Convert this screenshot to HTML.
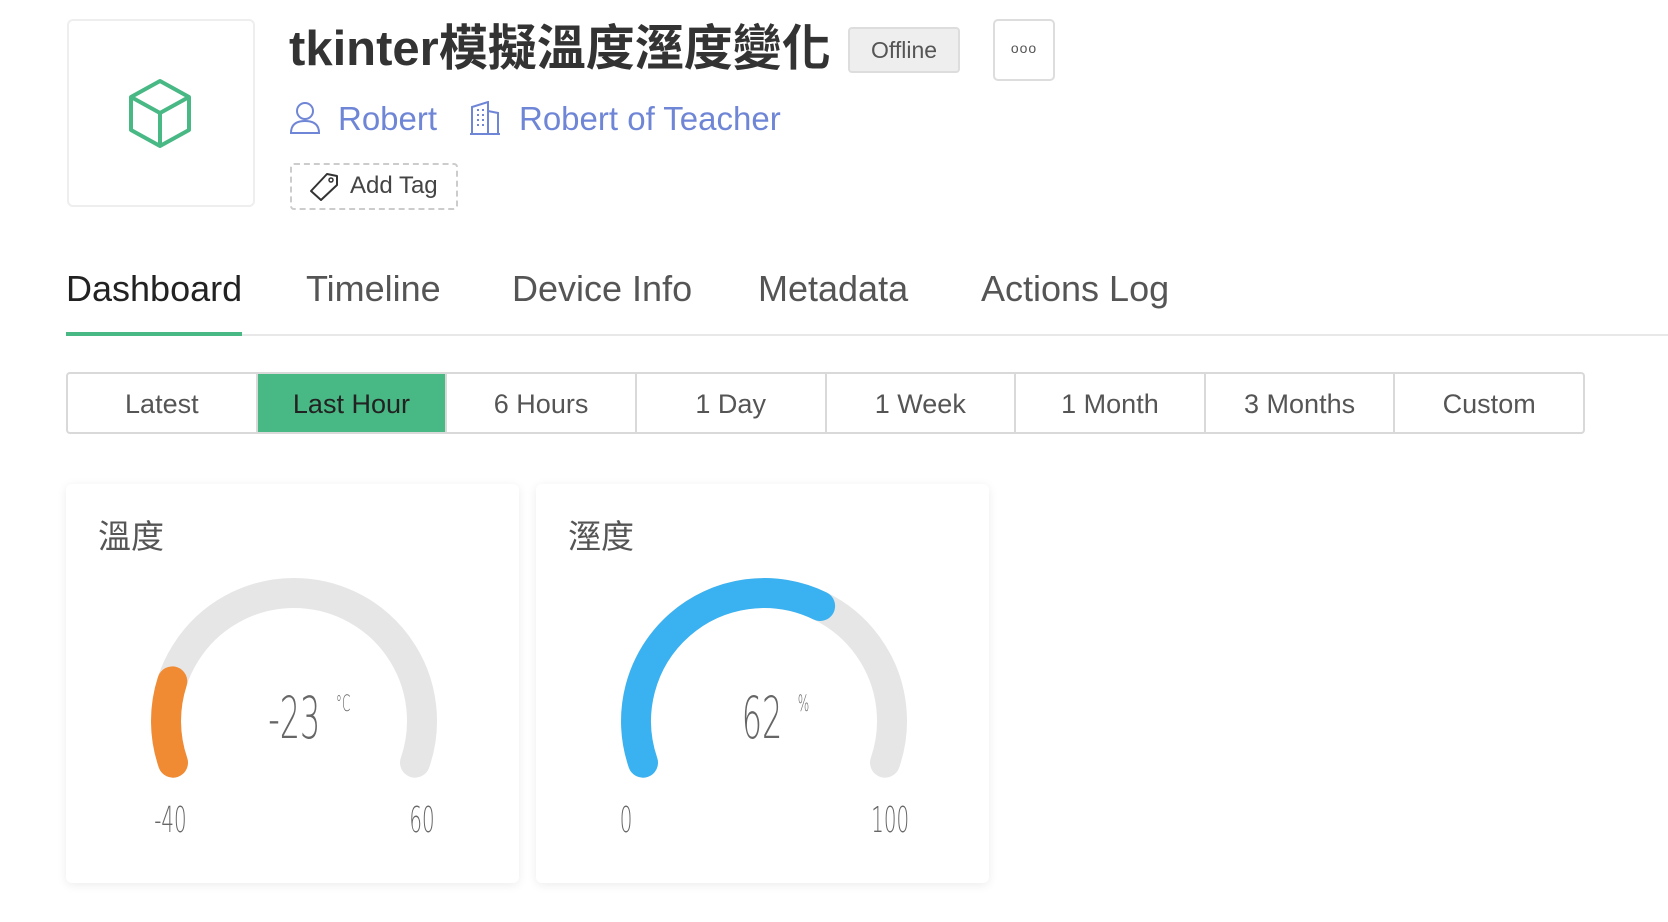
<!DOCTYPE html>
<html><head><meta charset="utf-8"><style>
body{margin:0;width:1668px;height:922px;background:#fff;position:relative;overflow:hidden;font-family:"Liberation Sans","Noto Sans CJK TC",sans-serif;}
.a{position:absolute;white-space:nowrap}
.tab{position:absolute;top:268px;font-size:36px;color:#555;line-height:42px}
.btns{position:absolute;left:66px;top:372px;width:1519px;height:62px;border:2px solid #d9d9d9;border-radius:4px;display:flex;box-sizing:border-box}
.btns div{flex:1;text-align:center;line-height:60px;font-size:27px;color:#555;border-left:2px solid #d9d9d9}
.btns div:first-child{border-left:none}
.btns .on{background:#48b884;color:#222}
.card{position:absolute;top:484px;width:453px;height:399px;background:#fff;border-radius:6px;box-shadow:0 2px 10px rgba(0,0,0,0.08)}
.ct{position:absolute;left:32px;top:26px;font-size:33px;color:#555}
.num{position:absolute;font-family:"DejaVu Sans",sans-serif;font-weight:200;color:#666;transform:scaleX(0.55);transform-origin:center}
</style></head><body>
<div class="a" style="left:67px;top:19px;width:188px;height:188px;border:2px solid #eee;border-radius:6px;box-sizing:border-box"></div>
<svg class="a" style="left:125px;top:78px" width="70" height="70" viewBox="0 0 70 70"><path d="M35 3 L64 19 L64 52 L35 68 L6 52 L6 19 Z M6 19 L35 35 L64 19 M35 35 L35 68" fill="none" stroke="#48b884" stroke-width="4" stroke-linejoin="round"/></svg>
<div class="a" style="left:289px;top:18px;font-size:49px;font-weight:bold;color:#333;line-height:62px">tkinter模擬溫度溼度變化</div>
<div class="a" style="left:848px;top:27px;width:112px;height:46px;background:#eee;border:2px solid #ddd;border-radius:4px;box-sizing:border-box;text-align:center;line-height:42px;font-size:23px;color:#555">Offline</div>
<div class="a" style="left:993px;top:19px;width:62px;height:62px;border:2px solid #ddd;border-radius:5px;box-sizing:border-box;text-align:center;line-height:54px;font-size:14px;color:#555;letter-spacing:1px">ooo</div>
<svg class="a" style="left:289px;top:101px" width="32" height="34" viewBox="0 0 32 34"><circle cx="16" cy="10" r="8" fill="none" stroke="#6f86d6" stroke-width="2"/><path d="M2 32 Q2 20 16 20 Q30 20 30 32 Z" fill="none" stroke="#6f86d6" stroke-width="2"/></svg>
<div class="a" style="left:338px;top:98px;font-size:33px;color:#6f86d6;line-height:42px">Robert</div>
<svg class="a" style="left:470px;top:101px" width="30" height="34" viewBox="0 0 30 34"><path d="M2 33 L2 6 L18 1 L18 33 M18 10 L28 12 L28 33 M0 33 L30 33" fill="none" stroke="#6f86d6" stroke-width="2"/><path d="M7 9h2M12 9h2M7 14h2M12 14h2M7 19h2M12 19h2M7 24h2M12 24h2" stroke="#6f86d6" stroke-width="2"/></svg>
<div class="a" style="left:519px;top:98px;font-size:33px;color:#6f86d6;line-height:42px">Robert of Teacher</div>
<div class="a" style="left:290px;top:163px;width:168px;height:47px;border:2px dashed #ccc;border-radius:4px;box-sizing:border-box"></div>
<svg class="a" style="left:307px;top:172px" width="32" height="30" viewBox="0 0 32 30"><path d="M20 2 L30 4 L30 13 L14 28 L4 19 Z" fill="none" stroke="#333" stroke-width="2" stroke-linejoin="round"/><circle cx="24" cy="8" r="2" fill="none" stroke="#333" stroke-width="1.5"/></svg>
<div class="a" style="left:350px;top:170px;font-size:24px;color:#444;line-height:32px">Add Tag</div>
<div class="tab" style="left:66px;color:#222">Dashboard</div>
<div class="tab" style="left:306px">Timeline</div>
<div class="tab" style="left:512px">Device Info</div>
<div class="tab" style="left:758px">Metadata</div>
<div class="tab" style="left:981px">Actions Log</div>
<div class="a" style="left:66px;top:334px;width:1602px;height:2px;background:#e8e8e8"></div>
<div class="a" style="left:66px;top:332px;width:176px;height:4px;background:#48b884"></div>
<div class="btns"><div>Latest</div><div class="on">Last Hour</div><div>6 Hours</div><div>1 Day</div><div>1 Week</div><div>1 Month</div><div>3 Months</div><div>Custom</div></div>
<div class="card" style="left:66px"><div class="ct">溫度</div></div>
<div class="card" style="left:536px"><div class="ct">溼度</div></div>
<svg class="a" style="left:0;top:0" width="1668" height="922">
<g fill="none" stroke-width="30" stroke-linecap="round">
<path d="M173 762.7 A128 128 0 1 1 415 762.7" stroke="#e6e6e6"/>
<path d="M173 762.7 A128 128 0 0 1 172.3 681.4" stroke="#f08a33"/>
<path d="M643 762.7 A128 128 0 1 1 885 762.7" stroke="#e6e6e6"/>
<path d="M643 762.7 A128 128 0 0 1 820.1 606" stroke="#3ab1f0"/>
</g></svg>
<div class="num" style="left:248px;top:684px;font-size:58px;width:90px;text-align:center">-23</div>
<div class="num" style="left:330px;top:692px;font-size:22px">°C</div>
<div class="num" style="left:722px;top:684px;font-size:58px;width:80px;text-align:center">62</div>
<div class="num" style="left:793px;top:692px;font-size:22px">%</div>
<div class="num" style="left:143px;top:800px;font-size:36px;width:50px;text-align:center">-40</div>
<div class="num" style="left:397px;top:800px;font-size:36px;width:50px;text-align:center">60</div>
<div class="num" style="left:601px;top:800px;font-size:36px;width:50px;text-align:center">0</div>
<div class="num" style="left:860px;top:800px;font-size:36px;width:50px;text-align:center">100</div>
</body></html>
